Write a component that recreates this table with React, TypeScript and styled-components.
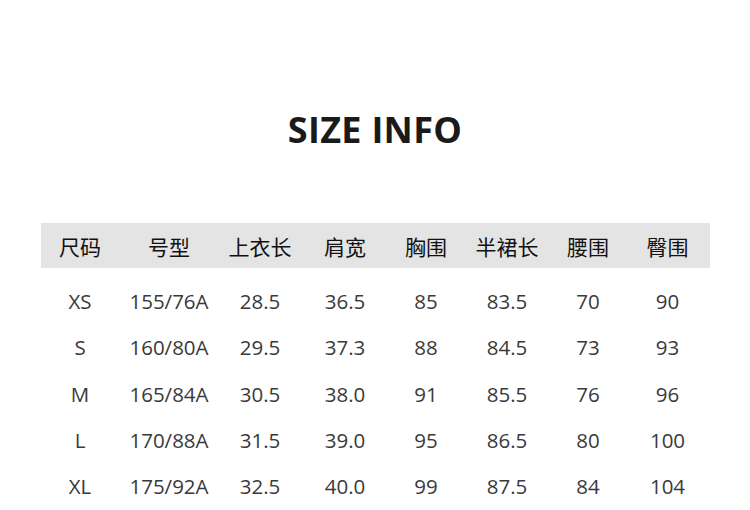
import React from "react";
import styled, { createGlobalStyle } from "styled-components";

const GlobalStyle = createGlobalStyle`
  html, body {
    margin: 0;
    padding: 0;
    background: #ffffff;
  }
`;

const Page = styled.div`
  width: 750px;
  height: 510px;
  overflow: hidden;
  font-family: "Open Sans", "Noto Sans", "Noto Sans CJK SC", sans-serif;
`;

const Title = styled.h1`
  margin: 0;
  padding-top: 106px;
  height: 48px;
  line-height: 48px;
  text-align: center;
  font-size: 36px;
  font-weight: 700;
  color: #1a1a1a;
  letter-spacing: 0.3px;
`;

const Table = styled.div`
  margin: 69px 0 0 41px;
  width: 669px;
`;

const Row = styled.div<{ $head?: boolean }>`
  display: grid;
  grid-template-columns: 78px 100px 82px 88px 74px 88px 74px 85px;
  align-items: center;
  height: ${({ $head }) => ($head ? "45px" : "46.25px")};
  background: ${({ $head }) => ($head ? "#e4e4e4" : "transparent")};
  margin-bottom: ${({ $head }) => ($head ? "10px" : "0")};
`;

const Cell = styled.div<{ $head?: boolean }>`
  text-align: center;
  white-space: nowrap;
  font-family: ${({ $head }) =>
    $head
      ? `"Noto Sans CJK SC", "Noto Sans", sans-serif`
      : `"Open Sans", "Noto Sans", sans-serif`};
  font-size: ${({ $head }) => ($head ? "21px" : "20.5px")};
  color: ${({ $head }) => ($head ? "#111111" : "#3a3a3a")};
`;

const headers = ["尺码", "号型", "上衣长", "肩宽", "胸围", "半裙长", "腰围", "臀围"];

const rows = [
  ["XS", "155/76A", "28.5", "36.5", "85", "83.5", "70", "90"],
  ["S", "160/80A", "29.5", "37.3", "88", "84.5", "73", "93"],
  ["M", "165/84A", "30.5", "38.0", "91", "85.5", "76", "96"],
  ["L", "170/88A", "31.5", "39.0", "95", "86.5", "80", "100"],
  ["XL", "175/92A", "32.5", "40.0", "99", "87.5", "84", "104"],
];

const App: React.FC = () => {
  return (
    <Page>
      <GlobalStyle />
      <Title>SIZE INFO</Title>
      <Table>
        <Row $head>
          {headers.map((h) => (
            <Cell $head key={h}>{h}</Cell>
          ))}
        </Row>
        {rows.map((r) => (
          <Row key={r[0]}>
            {r.map((v, i) => (
              <Cell key={i}>{v}</Cell>
            ))}
          </Row>
        ))}
      </Table>
    </Page>
  );
};

export default App;
